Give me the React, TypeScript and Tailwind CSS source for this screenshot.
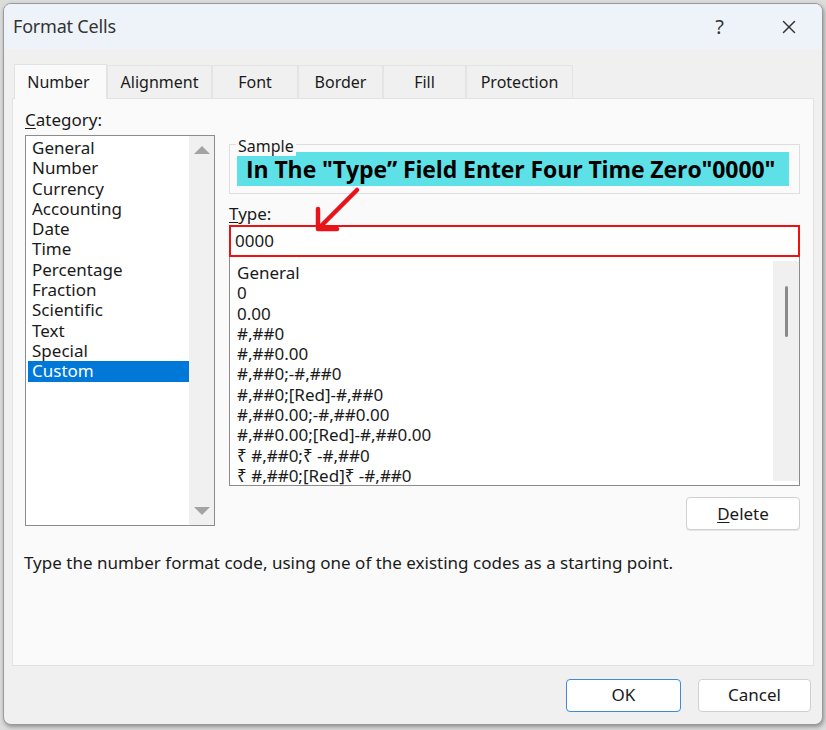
import { X } from "lucide-react";

const CATEGORIES = [
  "General",
  "Number",
  "Currency",
  "Accounting",
  "Date",
  "Time",
  "Percentage",
  "Fraction",
  "Scientific",
  "Text",
  "Special",
  "Custom",
];

const FORMATS = [
  "General",
  "0",
  "0.00",
  "#,##0",
  "#,##0.00",
  "#,##0;-#,##0",
  "#,##0;[Red]-#,##0",
  "#,##0.00;-#,##0.00",
  "#,##0.00;[Red]-#,##0.00",
  "₹ #,##0;₹ -#,##0",
  "₹ #,##0;[Red]₹ -#,##0",
];

const TABS = [
  { label: "Number", w: "w-[93px]" },
  { label: "Alignment", w: "w-[105px]" },
  { label: "Font", w: "w-[86px]" },
  { label: "Border", w: "w-[85px]" },
  { label: "Fill", w: "w-[83px]" },
  { label: "Protection", w: "w-[107px]" },
];

const font = "font-['Noto_Sans','Open_Sans',sans-serif]";

export default function App() {
  return (
    <div className={`w-[826px] h-[730px] bg-[#dcdcdc] pt-[3px] pl-[3px] ${font}`}>
      <div className="relative w-[820px] h-[722px] flex flex-col rounded-[8px] border border-[#9a9a9a] bg-[#f0f0f0] shadow-[1px_2px_4px_rgba(0,0,0,0.35)] overflow-hidden">
        {/* title bar */}
        <div className="h-[45px] shrink-0 flex items-center bg-[#eef3f9] pl-[9px] pr-[22px]">
          <span className="text-[18px] text-[#333] tracking-[-0.2px]">Format Cells</span>
          <span className="ml-auto text-[20px] text-[#333]">?</span>
          <X className="ml-[54px] w-[22px] h-[22px] text-[#333]" strokeWidth={1.6} />
        </div>

        {/* tabs */}
        <div className="mt-[15px] flex items-end pl-[10px] h-[34px]">
          {TABS.map((t, i) => (
            <div
              key={t.label}
              className={`${t.w} flex items-center justify-center text-[16px] text-[#1a1a1a] border border-b-0 ${
                i === 0
                  ? "h-[35px] bg-[#fafafa] border-[#e2e2e2] relative z-10 -mb-px pr-[4px]"
                  : "h-[33px] bg-[#f0f0f0] border-[#e4e4e4]"
              }`}
            >
              {t.label}
            </div>
          ))}
        </div>

        {/* panel */}
        <div className="mx-[8px] h-[568px] bg-[#fafafa] border border-[#e2e2e2] relative">
          <div className="flex pl-[12px] pt-[11px]">
            {/* category column */}
            <div className="w-[190px] flex flex-col">
              <div className="text-[17px] leading-[20px] text-[#1a1a1a]">
                <span className="underline underline-offset-2">C</span>ategory:
              </div>
              <div className="mt-[5px] h-[391px] border border-[#8c8c8c] bg-white flex">
                <div className="flex-1 pt-[2px] pl-[2px]">
                  {CATEGORIES.map((c) => (
                    <div
                      key={c}
                      className={`h-[20.3px] leading-[20.3px] pl-[4px] text-[17px] ${
                        c === "Custom" ? "bg-[#0078d7] text-white" : "text-[#1a1a1a]"
                      }`}
                    >
                      {c}
                    </div>
                  ))}
                </div>
                <div className="w-[25px] bg-[#f0f0f0] flex flex-col items-center justify-between py-[10px]">
                  <div className="w-0 h-0 border-l-[8px] border-r-[8px] border-b-[8px] border-l-transparent border-r-transparent border-b-[#a3a3a3]" />
                  <div className="w-0 h-0 border-l-[8px] border-r-[8px] border-t-[8px] border-l-transparent border-r-transparent border-t-[#a3a3a3]" />
                </div>
              </div>
            </div>

            {/* right column */}
            <div className="ml-[14px] w-[571px] flex flex-col">
              {/* sample group */}
              <div className="mt-[34px] h-[50px] border border-[#dedede] relative px-[7px] pt-[7px]">
                <span className="absolute -top-[9px] left-[6px] px-[2px] bg-[#fafafa] text-[16px] leading-[20px] text-[#1a1a1a]">
                  Sample
                </span>
                <div className="h-[34px] w-[552px] bg-[#5de0e6] flex items-center pl-[9px] font-['Open_Sans','Noto_Sans',sans-serif] font-bold text-[23px] text-black tracking-[-0.1px] whitespace-nowrap">
                  In The "Type” Field Enter Four Time Zero"0000"
                </div>
              </div>

              <div className="mt-[10px] text-[17px] leading-[20px] text-[#1a1a1a]">
                <span className="underline underline-offset-2">T</span>ype:
              </div>
              <div className="mt-[1px] h-[32px] border-2 border-[#ee1111] bg-white flex items-center pl-[4px] text-[17px] text-[#1a1a1a]">
                0000
              </div>
              <div className="h-[229px] border border-[#8c8c8c] border-t-0 bg-white flex overflow-hidden">
                <div className="flex-1 pt-[6px] pl-[7px]">
                  {FORMATS.map((f) => (
                    <div key={f} className="h-[20.3px] leading-[20.3px] text-[17px] text-[#1a1a1a] whitespace-nowrap">
                      {f}
                    </div>
                  ))}
                </div>
                <div className="w-[26px] my-[4px] bg-[#f0f0f0] flex justify-center pt-[25px]">
                  <div className="w-[3px] h-[51px] rounded-full bg-[#8a8a8a]" />
                </div>
              </div>

              <div className="mt-[11px] flex justify-end">
                <button className="w-[114px] h-[33px] rounded-[4px] border border-[#d0d0d0] bg-white text-[17px] text-[#1a1a1a] shadow-[0_1px_0_rgba(0,0,0,0.08)]">
                  <span className="underline underline-offset-2">D</span>elete
                </button>
              </div>
            </div>
          </div>

          <div className="mt-[23px] pl-[11px] text-[17px] leading-[20px] text-[#1a1a1a]">
            Type the number format code, using one of the existing codes as a starting point.
          </div>

          {/* red arrow annotation */}
          <svg className="absolute left-0 top-0 pointer-events-none" width="800" height="568" viewBox="0 0 800 568">
            <g stroke="#e8141b" strokeWidth="4.5" strokeLinecap="round" strokeLinejoin="round" fill="none">
              <line x1="344" y1="91" x2="307" y2="128" />
              <polyline points="305,110 305,130 324,130" />
            </g>
          </svg>
        </div>

        {/* footer */}
        <div className="flex-1 flex items-center justify-end pr-[11px] gap-[17px]">
          <button className="w-[115px] h-[33px] rounded-[4px] border border-[#3c8ad9] bg-white text-[17px] text-[#1a1a1a]">
            OK
          </button>
          <button className="w-[113px] h-[33px] rounded-[4px] border border-[#d0d0d0] bg-white text-[17px] text-[#1a1a1a]">
            Cancel
          </button>
        </div>
      </div>
    </div>
  );
}
